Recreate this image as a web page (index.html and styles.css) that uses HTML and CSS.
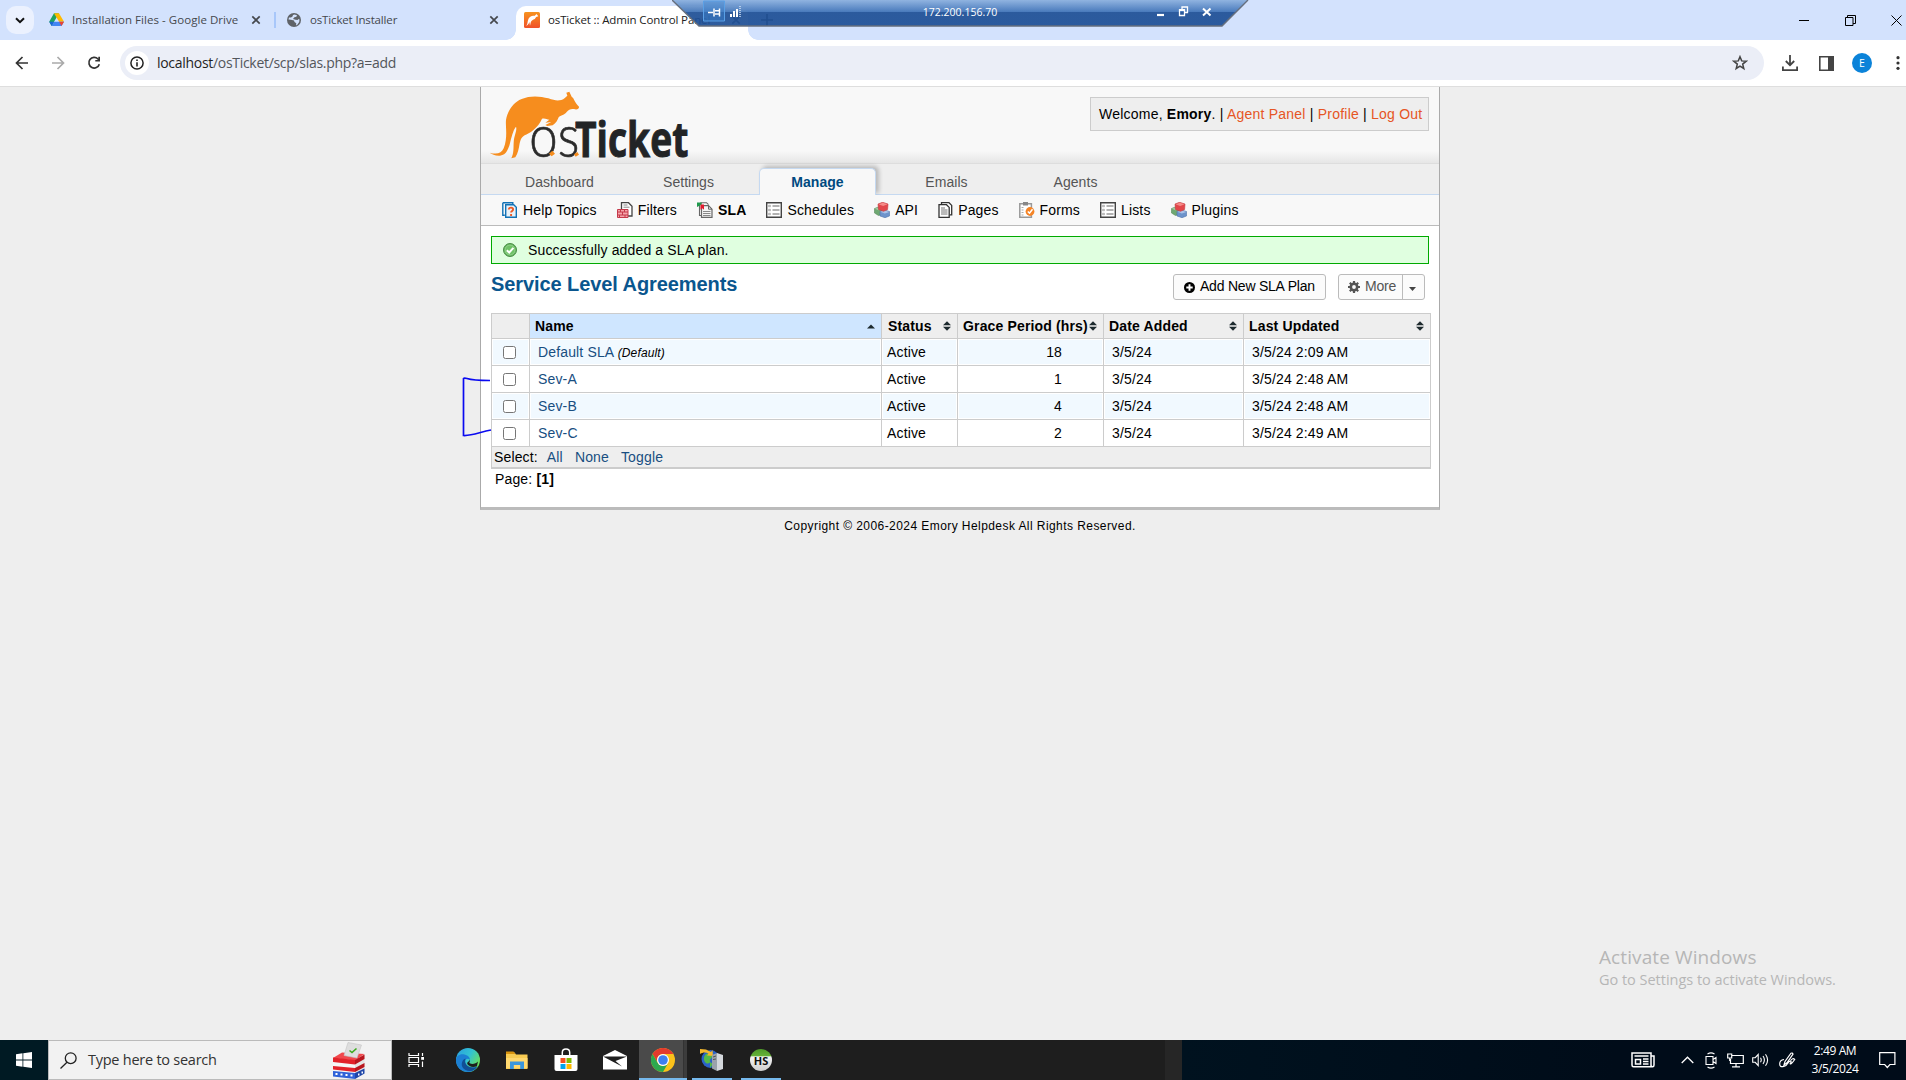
FILE: index.html
```html
<!DOCTYPE html>
<html lang="en">
<head>
<meta charset="utf-8">
<title>osTicket :: Admin Control Panel</title>
<link rel="stylesheet" href="styles.css">
</head>
<body>
<svg class="defs" width="0" height="0">
  <defs>
    <symbol id="i-x" viewBox="0 0 10 10"><path d="M1.3 1.3l7.4 7.4M8.7 1.3L1.3 8.7" stroke="currentColor" stroke-width="1.7" fill="none"/></symbol>
    <symbol id="i-list" viewBox="0 0 16 16"><path d="M.7.7h14.6v14.6H.7z" fill="#fff" stroke="#444" stroke-width="1.4"/><path d="M6.500 4h7M6.500 8h7M6.500 12h7" stroke="#999" stroke-width="1.3"/><path d="M2.500 3.200h2v1.600h-2zM2.500 7.200h2v1.600h-2zM2.500 11.200h2v1.600h-2z" fill="#bbb" stroke="#aaa" stroke-width=".6"/></symbol>
    <symbol id="i-cubes" viewBox="0 0 16 16"><path d="M.5 6.500l4-1.500 3.500 2v5.500l-3.500 1L.5 11z" fill="#6fa872" stroke="#578a5b" stroke-width=".6"/><path d="M.8 6.800l3.700 1.400L7 7.500 4.500 5.300z" fill="#a4cba5"/><path d="M6 9.500l4.500-1.500 5 1.500v4.500L11 15.700l-5-1.700z" fill="#6d93cb" stroke="#4f74ab" stroke-width=".6"/><path d="M6.200 9.800l4.700 1.700 4.400-1.600L11 8.300z" fill="#a9c2e8"/><path d="M4 2l4.500-1.700L14 2l-.4 5.500L9.500 9.300 4.500 7.500z" fill="#e2474b" stroke="#c23a40" stroke-width=".6"/><path d="M4.400 2.300l4.800 1.700 4.400-1.700L8.800.8z" fill="#f58b88"/></symbol>
    <symbol id="i-sort" viewBox="0 0 8 10"><path d="M0 4.300l4-4 4 4zM0 5.700l4 4 4-4z" fill="#1d2a2e"/></symbol>
    <linearGradient id="g-rdp" x2="0" y2="1"><stop offset="0" stop-color="#8bb0de"/><stop offset=".47" stop-color="#3d71b6"/><stop offset=".48" stop-color="#1f5096"/><stop offset="1" stop-color="#1f5096"/></linearGradient>
    <linearGradient id="g-fav" x2="0" y2="1"><stop offset="0" stop-color="#f7931e"/><stop offset="1" stop-color="#f0512a"/></linearGradient>
    <linearGradient id="g-edge" x1="0" y1="0" x2="1" y2=".6"><stop offset="0" stop-color="#2a9de0"/><stop offset=".55" stop-color="#32c3d2"/><stop offset="1" stop-color="#6be05a"/></linearGradient>
    <linearGradient id="g-hs" x2="0" y2="1"><stop offset="0" stop-color="#4f9a2a"/><stop offset=".3" stop-color="#64b036"/><stop offset=".36" stop-color="#f4f4f4"/><stop offset="1" stop-color="#cfcfcf"/></linearGradient>
  </defs>
</svg>

<header class="tabstrip">
  <span class="tab-search"><svg width="10" height="7" viewBox="0 0 10 7"><path d="M1 1.200l4 4 4-4" stroke="#111" stroke-width="2" fill="none"/></svg></span>
  <div class="tab tab-drive">
    <svg width="15" height="14" viewBox="0 0 15 14"><path d="M5 .3h5L5.200 8.500 2.700 13 .2 8.800z" fill="#1ea362"/><path d="M5 .3h5l5 8.500h-4.900z" fill="#ffba00"/><path d="M2.700 13l2.400-4.200H15L12.500 13z" fill="#4285f4"/><path d="M.2 8.800h4.900L2.700 13z" fill="#1a66d6"/><path d="M10.100 8.800H15L12.500 13z" fill="#ea4335"/></svg>
    <span class="tab-title t-drive">Installation Files - Google Drive</span>
    <svg class="x" width="10" height="10"><use href="#i-x"/></svg>
  </div>
  <i class="tab-sep"></i>
  <div class="tab tab-inst">
    <svg width="14" height="14" viewBox="0 0 14 14"><circle cx="7" cy="7" r="7" fill="#5f6368"/><path d="M7.500 1.400l2.500.8-.6 1.500-2 .6L6 6l2.500.8 2 .2 1.200-1 .8.600-.3 2.500-1.700 2.500-1.500 1 .3-2.300-1.800-1.300-.5-1.500L4 6.800 1.500 6.500l.5-2L4 4.500l1.500-1 .5-1.500z" fill="#d3e2fd"/></svg>
    <span class="tab-title t-inst">osTicket Installer</span>
    <svg class="x" width="10" height="10"><use href="#i-x"/></svg>
  </div>
  <div class="tab tab-active">
    <svg width="16" height="16" viewBox="0 0 16 16"><rect width="16" height="16" rx="1.500" fill="url(#g-fav)"/><path d="M2 13.800C4 13 3.200 8.500 5 6c1.500-2.200 4-2.300 5.800-2.300L12.500 2l1.800 2.300-2.200.7-1.300 2C9 7.500 7.500 8.500 6.800 10.200l-.8 3.500-.6-3.700C4.800 11.500 4 13.500 2 13.800z" fill="#fff"/></svg>
    <span class="tab-title t-admin">osTicket :: Admin Control Panel</span>
    <svg class="x" width="10" height="10"><use href="#i-x"/></svg>
  </div>
  <svg class="newtab" width="12" height="12" viewBox="0 0 12 12"><path d="M6 0v12M0 6h12" stroke="#333" stroke-width="1.600"/></svg>
  <div class="win-ctl">
    <svg width="11" height="11" viewBox="0 0 11 11"><path d="M0 5.500h10" stroke="#000"/></svg>
    <svg width="11" height="11" viewBox="0 0 11 11"><path d="M.5 2.500h7.500v8H.5zM2.500 2.500v-2h8v8H8" fill="none" stroke="#000"/></svg>
    <svg width="11" height="11" viewBox="0 0 11 11"><path d="M.5.5l10 10M10.500.5l-10 10" stroke="#000"/></svg>
  </div>
  <div class="rdp">
    <svg width="578" height="28" viewBox="0 0 578 28"><path d="M0 0h576l-26 26H27z" fill="url(#g-rdp)" opacity=".93"/><path d="M0 0l27 26h523l26-26" fill="none" stroke="#666f7d" stroke-width="1.400"/><path d="M31.500 1h21v20h-21z" fill="#3b82cf" fill-opacity=".45" stroke="#5aa0e6"/>
      <path d="M36 12.500h5M42 8.500v8M43 10.700h4M43 14h4M47.500 8.500v8" stroke="#fff" stroke-width="1.500" fill="none"/>
      <path d="M59 17v-3M62 17v-6M65 17V9" stroke="#fff" stroke-width="2"/><path d="M68 17V6" stroke="#cfe0f5" stroke-width="1.500" stroke-dasharray="1 1"/>
      <path d="M485 15h7" stroke="#fff" stroke-width="2.200"/><path d="M507.500 10h5v5.500h-5zM510 9.500V7h5.500v5.500H513" fill="none" stroke="#fff" stroke-width="1.300"/><path d="M507 10h6" stroke="#fff" stroke-width="2"/><path d="M531 8.500l7.500 7M538.500 8.500l-7.500 7" stroke="#fff" stroke-width="2"/></svg>
    <span>172.200.156.70</span>
  </div>
</header>

<div class="toolbar">
  <svg class="nav-ic" width="14" height="14" viewBox="0 0 14 14"><path d="M7.500 1L1.500 7l6 6M1.500 7H13" stroke="#333" stroke-width="1.700" fill="none"/></svg>
  <svg class="nav-ic" width="14" height="14" viewBox="0 0 14 14"><path d="M6.500 1l6 6-6 6M12.500 7H1" stroke="#aaa" stroke-width="1.700" fill="none"/></svg>
  <svg class="nav-ic" width="14" height="14" viewBox="0 0 14 14"><path d="M12.300 8.200A5.300 5.300 0 1 1 11 3l1 1" stroke="#333" stroke-width="1.700" fill="none"/><path d="M13 .8V5.500H8.300V3.900h3V.8z" fill="#333"/></svg>
  <div class="omnibox">
    <span class="site-info"><svg width="14" height="14" viewBox="0 0 14 14"><circle cx="7" cy="7" r="6.100" fill="none" stroke="#222" stroke-width="1.500"/><path d="M7 6.200V10.500" stroke="#222" stroke-width="1.600"/><path d="M6.200 3.500h1.600v1.500H6.200z" fill="#222"/></svg></span>
    <span class="url">localhost<span>/osTicket/scp/slas.php?a=add</span></span>
    <svg class="star" width="16" height="16" viewBox="0 0 16 16"><path d="M8 1.700l1.700 4.200 4.500.3-3.500 2.900 1.100 4.400L8 11.100l-3.800 2.400 1.100-4.400-3.500-2.900 4.500-.3z" fill="none" stroke="#444" stroke-width="1.500"/></svg>
  </div>
  <div class="tools">
    <svg class="dl" width="16" height="16" viewBox="0 0 16 16"><path d="M8 0v9.500M3.800 6L8 10.200 12.200 6M.9 11.500v3.600h14.200v-3.600" fill="none" stroke="#444" stroke-width="1.800"/></svg>
    <svg width="15" height="15" viewBox="0 0 15 15"><path d="M.8.800h13.400v13.400H.8z" fill="none" stroke="#444" stroke-width="1.600"/><path d="M9 0h6v15H9z" fill="#444"/></svg>
    <span class="avatar">E</span>
    <svg class="kebab" width="4" height="14" viewBox="0 0 4 14"><circle cx="2" cy="1.700" r="1.600" fill="#333"/><circle cx="2" cy="7" r="1.600" fill="#333"/><circle cx="2" cy="12.300" r="1.600" fill="#333"/></svg>
  </div>
</div>

<main class="viewport">
  <div class="container">
    <div class="head">
      <svg class="logo" width="210" height="76" viewBox="45 21 630 228">
        <path fill="#f68d1e" d="M59 218C80 224 95 220 101 205C114 172 106 140 108 120C112 95 128 68 155 57C180 46 210 48 235 55C252 61 262 63 274 60C282 57 288 50 292 47L289 38L298 35L305 50C313 55 313 66 327 80C328 87 320 90 312 87C302 86 296 88 290 96C284 105 272 105 266 112C262 122 258 130 248 136L232 138L226 135L244 126L226 128L238 119C230 118 226 114 216 116C208 134 196 148 176 160C156 170 154 172 149 190C146 208 144 220 136 232L124 235C132 218 130 205 131 188C132 165 142 152 138 140C132 146 126 165 121 185C114 216 104 226 90 227C76 228 66 223 59 218Z"/>
        <text x="178" y="230" class="logo-os" textLength="150" lengthAdjust="spacingAndGlyphs">os</text>
        <path d="M237 221l10-9 8 9-10 8zM312 223l10-7 5 8-10 6z" fill="#f68d1e"/>
        <text x="315" y="231" class="logo-ticket" textLength="340" lengthAdjust="spacingAndGlyphs">Ticket</text>
      </svg>
      <p class="welcome">Welcome, <b>Emory</b>. | <a>Agent Panel</a> | <a>Profile</a> | <a>Log Out</a></p>
    </div>
    <nav class="nav"><a>Dashboard</a><a>Settings</a><a class="active">Manage</a><a>Emails</a><a>Agents</a></nav>
    <nav class="subnav">
      <a><svg width="16" height="16" viewBox="0 0 16 16"><path d="M.8.7h10v2M.8.7v12.500h2" fill="none" stroke="#1272b6" stroke-width="1.400"/><path d="M3.700 2.700h8l2.600 2.600v10H3.700z" fill="#e9f2f9" stroke="#1272b6" stroke-width="1.400"/><path d="M6.800 7.500c0-2.500 4.300-2.500 4.300 0 0 1.500-2 1.500-2 3M9.100 12v2" stroke="#ee5a24" stroke-width="1.900" fill="none"/></svg>Help Topics</a>
      <a><svg width="16" height="16" viewBox="0 0 16 16"><path d="M4.500 8V.7h7l3.500 3.500V14H11" fill="#fff" stroke="#444" stroke-width="1.300"/><path d="M6.500 3h4M6.500 5.200h6" stroke="#888"/><path d="M.5 7.500h10.500v8H.5z" fill="#f5a5ab" stroke="#c5394a"/><path d="M.5 10h10.500M.5 13h10.500M3.500 7.500V10M7.500 7.500V10M5.500 10v3M2.500 13v2.500M8 13v2.500" stroke="#c5394a"/></svg>Filters</a>
      <a class="on"><svg width="16" height="16" viewBox="0 0 16 16"><path d="M2.500 3V13.500H4M4 2.500V.7h5.500l2 2" fill="none" stroke="#666" stroke-width="1.100"/><path d="M4.500 3.700h7l3.500 3.500v8.200H4.500z" fill="#f4f4f4" stroke="#666" stroke-width="1.200"/><path d="M11.500 3.700v3.500H15" fill="none" stroke="#666"/><path d="M6 9.500h7.500M6 11.500h7.500M6 13.500h7.500" stroke="#888"/><path d="M0 .5h4.500v2.200L0 5z" fill="#1f9a4d"/><path d="M3.500 2.500h3.500v5.200L5.300 6.300 3.500 7.700z" fill="#e01b2e"/></svg>SLA</a>
      <a><svg width="16" height="16"><use href="#i-list"/></svg>Schedules</a>
      <a><svg width="16" height="16"><use href="#i-cubes"/></svg>API</a>
      <a><svg width="15" height="16" viewBox="0 0 15 16"><path d="M3.500 2.500V.7h7.500l2.700 2.700v9.500h-2" fill="#fff" stroke="#333" stroke-width="1.300"/><path d="M1 2.700h7.500l2.700 2.700v9.900H1z" fill="#fff" stroke="#333" stroke-width="1.300"/><path d="M3 6h4M3 8h6.500M3 10h6.500M3 12h6.500" stroke="#777"/></svg>Pages</a>
      <a><svg width="16" height="16" viewBox="0 0 16 16"><path d="M.8 1.800h11.600v13.400H.8z" fill="#fff" stroke="#999" stroke-width="1.500"/><path d="M4 0h5v3.500H4z" fill="#888"/><path d="M2.500 5.500h2M2.500 8h2M2.500 10.500h2M2.500 13h2" stroke="#aaa"/><circle cx="11" cy="9.500" r="4.400" fill="#f58426"/><path d="M8.800 9.500l1.700 1.700 3-4" stroke="#fff" stroke-width="1.500" fill="none"/></svg>Forms</a>
      <a><svg width="16" height="16"><use href="#i-list"/></svg>Lists</a>
      <a><svg width="16" height="16"><use href="#i-cubes"/></svg>Plugins</a>
    </nav>
    <section class="content">
      <div class="notice"><svg width="14" height="14" viewBox="0 0 14 14"><circle cx="7" cy="7" r="6.500" fill="#5cb055" stroke="#4b8f48"/><circle cx="7" cy="7" r="5" fill="#6fc267" stroke="#a6dba0" stroke-width=".7"/><path d="M3.800 7.200l2.400 2.300 4.200-4.700" stroke="#fff" stroke-width="2" fill="none"/></svg>Successfully added a SLA plan.</div>
      <div class="title-row">
        <h2>Service Level Agreements</h2>
        <a class="btn btn-add"><svg width="11" height="11" viewBox="0 0 11 11"><circle cx="5.500" cy="5.500" r="5.500" fill="#000"/><path d="M5.500 2.300v6.400M2.300 5.500h6.400" stroke="#fff" stroke-width="1.900"/></svg><span>Add New SLA Plan</span></a>
        <span class="btn btn-more"><span class="more"><svg width="12" height="12" viewBox="0 0 12 12"><circle cx="6" cy="6" r="3.200" fill="none" stroke="#555" stroke-width="2.600"/><path d="M6 0v2.500M6 9.500V12M0 6h2.500M9.500 6H12M1.800 1.800l1.700 1.700M8.500 8.500l1.700 1.700M10.200 1.800L8.500 3.500M3.500 8.500l-1.700 1.700" stroke="#555" stroke-width="2.200"/></svg><span>More</span></span><span class="caret"><svg width="7" height="4" viewBox="0 0 7 4"><path d="M0 0h7L3.500 4z" fill="#444"/></svg></span></span>
      </div>
      <table class="list">
        <colgroup><col class="c0"><col class="c1"><col class="c2"><col class="c3"><col class="c4"><col class="c5"></colgroup>
        <thead><tr><th></th>
          <th class="sorted"><div>Name<svg width="8" height="5" viewBox="0 0 8 5"><path d="M0 4.500L4 .5l4 4z" fill="#1d2a2e"/></svg></div></th>
          <th><div>Status<svg width="8" height="10"><use href="#i-sort"/></svg></div></th>
          <th><div>Grace Period (hrs)<svg width="8" height="10"><use href="#i-sort"/></svg></div></th>
          <th><div>Date Added<svg width="8" height="10"><use href="#i-sort"/></svg></div></th>
          <th><div>Last Updated<svg width="8" height="10"><use href="#i-sort"/></svg></div></th></tr></thead>
        <tbody>
          <tr><td><input type="checkbox"></td><td class="name"><a>Default SLA</a> <em>(Default)</em></td><td>Active</td><td class="num">18</td><td class="date">3/5/24</td><td class="date">3/5/24 2:09 AM</td></tr>
          <tr><td><input type="checkbox"></td><td class="name"><a>Sev-A</a></td><td>Active</td><td class="num">1</td><td class="date">3/5/24</td><td class="date">3/5/24 2:48 AM</td></tr>
          <tr><td><input type="checkbox"></td><td class="name"><a>Sev-B</a></td><td>Active</td><td class="num">4</td><td class="date">3/5/24</td><td class="date">3/5/24 2:48 AM</td></tr>
          <tr><td><input type="checkbox"></td><td class="name"><a>Sev-C</a></td><td>Active</td><td class="num">2</td><td class="date">3/5/24</td><td class="date">3/5/24 2:49 AM</td></tr>
        </tbody>
        <tfoot><tr><td colspan="6"><div>Select:<a>All</a><a>None</a><a>Toggle</a></div></td></tr></tfoot>
      </table>
      <p class="pager">Page: <b>[1]</b></p>
    </section>
    <svg class="bracket" width="32" height="64" viewBox="0 0 32 64"><path d="M30 6.500C20 6.500 13 6.500 7 4.500C5 4 4 4 3.500 4.500V61.500C12 62 20 58 31 56" fill="none" stroke="#0a0af0" stroke-width="1.700"/></svg>
  </div>
  <p class="copyright">Copyright © 2006-2024 Emory Helpdesk All Rights Reserved.</p>
  <div class="watermark"><strong>Activate Windows</strong><span>Go to Settings to activate Windows.</span></div>
</main>

<footer class="taskbar">
  <span class="start"><svg width="16" height="16" viewBox="0 0 16 16"><path d="M0 2.200l6.500-.9v6.300H0zM7.300 1.200L16 0v7.600H7.300zM0 8.400h6.500v6.300L0 13.800zM7.300 8.400H16V16l-8.700-1.200z" fill="#fff"/></svg></span>
  <div class="search">
    <svg width="17" height="17" viewBox="0 0 17 17"><circle cx="10.700" cy="6.200" r="5.400" fill="none" stroke="#222" stroke-width="1.300"/><path d="M7 10.200L.5 16.500" stroke="#222" stroke-width="1.300"/></svg>
    <span>Type here to search</span>
    <svg class="ballot" width="32" height="37" viewBox="0 0 32 37"><path d="M0 16l22 2v19L0 34.500z" fill="#f6f6f6"/><path d="M22 18l9.500-5v18.500L22 37z" fill="#e4e4e4"/><path d="M0 16l9-5.500 22.500 1.500L22 18.500z" fill="#f0484c"/><path d="M0 15.500l22 2.500v4.500L0 20zM0 24l22 2v4L0 27.500z" fill="#e2222a"/><path d="M22 18l9.500-5.500v4.500L22 22.500zM22 26l9.500-5v4L22 30z" fill="#b9161e"/><path d="M0 29l22 2v6L0 34.500z" fill="#2f62d8"/><path d="M22 31l9.500-4.500v5L22 37z" fill="#1f46a8"/><path d="M2.500 32h2M7.500 32.500h2M12.500 33h2M17.500 33.500h2M25 32.500h1.500M28.500 30.500h1.500" stroke="#fff" stroke-width="2"/><path d="M11 13.500L15 .5l13.500 2.500L24 16z" fill="#dedede" stroke="#c4c4c4" stroke-width=".6"/><path d="M16.500 8.500l2.500 2 4.500-4" stroke="#3bab1e" stroke-width="1.600" fill="none"/></svg>
  </div>
  <div class="apps">
    <span class="app app-view"><svg width="17" height="16" viewBox="0 0 17 16"><path d="M1 1v2.500h9.500V1M1 15v-2.500h9.500V15M1 5.500h9.500v5H1zM14.500 1v3M14.500 9.500V15" fill="none" stroke="#fff" stroke-width="1.200"/><path d="M13.200 5h2.800v2.800h-2.800z" fill="#fff"/></svg></span>
    <span class="app"><svg width="24" height="24" viewBox="0 0 24 24"><circle cx="12" cy="12" r="12" fill="url(#g-edge)"/><path d="M0 12c0-4 4-6.500 8.500-5.500 4 .8 5.500 3.500 5.500 5.500-1.500-2-4.500-1.500-5 1-.5 3.500 3 6.500 7 6.500 2.500 0 4.500-1 5.500-1.500C19.500 22 16 24 12 24 5 24 0 19 0 12z" fill="#1c7fd3"/><path d="M9.500 22C4 19.500 5 12 9.500 10.500c-1 3.500 0 9 8 9 2 0 3-.7 4-1.500-2.500 5-7.500 6-12 4z" fill="#114f95"/><path d="M14 12c.3 1.300-.8 2-.6 2.800.4 1.800 6.600 1.600 8.600-1.200l-1 4.400c-4 2-9 .5-10-3z" fill="#1e1e1e"/></svg></span>
    <span class="app"><svg width="22" height="19" viewBox="0 0 22 19"><path d="M0 1h8l2 2.500h11.500V18H0z" fill="#f8cb52"/><path d="M0 .5h7.500L9.500 3H0z" fill="#d9940f"/><path d="M0 7h21.500v10H0z" fill="#ffd86f"/><path d="M4 18v-7.500h14V18h-3.800v-4H7.800v4z" fill="#3a96dd"/></svg></span>
    <span class="app"><svg width="24" height="24" viewBox="0 0 24 24"><path d="M.5 7h23v14q0 2-2 2h-19q-2 0-2-2z" fill="#fff"/><path d="M8.300 8V4.500q0-3.500 3.700-3.500t3.700 3.500V8" stroke="#fff" stroke-width="1.500" fill="none"/><path d="M6.500 10h5v5h-5z" fill="#f25022"/><path d="M12.500 10h5v5h-5z" fill="#7fba00"/><path d="M6.500 16h5v5h-5z" fill="#00a4ef"/><path d="M12.500 16h5v5h-5z" fill="#ffb900"/></svg></span>
    <span class="app"><svg width="24" height="20" viewBox="0 0 24 20"><path d="M0 6L12 0l12 6v13.500H0z" fill="#fff"/><path d="M0 6.500h24L12.500 11l6.500 5.500L8.500 11z" fill="#1e1e1e"/></svg></span>
    <span class="app app-chrome"><svg width="24" height="24" viewBox="0 0 24 24"><circle cx="12" cy="12" r="12" fill="#fbc11a"/><path d="M1.600 6A12 12 0 0 1 22.400 6H12a6 6 0 0 0-5.200 9z" fill="#e33b2e"/><path d="M1.600 6A12 12 0 0 0 12 24l5.200-9a6 6 0 0 1-10.400 0z" fill="#2da94f"/><circle cx="12" cy="12" r="6" fill="#fff"/><circle cx="12" cy="12" r="4.800" fill="#3d7ff0"/></svg></span>
    <span class="app app-iis run"><svg width="24" height="24" viewBox="0 0 24 24"><circle cx="10.500" cy="11" r="9" fill="#2b62c9"/><path d="M6 6c3-2 5 0 6 2s-3 3-2 5-3 4-5 1-1-6 1-8zM10 14l3 2-3 4z" fill="#55b948"/><path d="M0 1l6 .5 5 2.500 1.500-2 .5 6-6-.5 1.500-2C6 4 3 4 0 6z" fill="#f4b82e"/><path d="M12 7l5-2v18l-5-2.500z" fill="#9aa3ab"/><path d="M17 5l6 2v14l-6 2z" fill="#d4d8dc"/><path d="M13 9l3-1M13 11.500l3-.5" stroke="#555"/></svg></span>
    <span class="app run"><svg width="22" height="22" viewBox="0 0 22 22"><circle cx="11" cy="11" r="11" fill="url(#g-hs)"/><text x="11" y="15.500" class="hs" text-anchor="middle">HS</text></svg></span>
  </div>
  <i class="seam"></i>
  <div class="tray">
    <svg class="news" width="24" height="16" viewBox="0 0 24 16"><path d="M1 1h19v13.800H2.500Q1 14.800 1 13zM20 4h3v9q0 1.800-1.500 1.800T20 13" fill="none" stroke="#fff" stroke-width="1.500"/><path d="M3.500 4h14M12 7h5.500M12 9.500h5.500M12 12h5.500" stroke="#fff" stroke-width="1.300"/><path d="M4.500 7.500h5v4.500h-5z" fill="none" stroke="#fff" stroke-width="1.500"/></svg>
    <svg class="up" width="13" height="8" viewBox="0 0 13 8"><path d="M.7 7L6.500 1.200 12.300 7" fill="none" stroke="#fff" stroke-width="1.300"/></svg>
    <svg class="meet" width="12" height="17" viewBox="0 0 12 17"><path d="M1 4.500h7v8H1zM8 7.500l3-2v6l-3-2M2.500 2q3.500-2.200 7 0M2.500 15q3.500 2.200 7 0" fill="none" stroke="#fff" stroke-width="1.100"/></svg>
    <svg class="net" width="17" height="15" viewBox="0 0 17 15"><path d="M5 2.500h11.300v8H3.500V6M9 10.500v3M5 13.800h8M.7 1h4v4h-4zM2.700 5v3" fill="none" stroke="#fff" stroke-width="1.200"/></svg>
    <svg class="vol" width="17" height="14" viewBox="0 0 17 14"><path d="M.7 4.700h2.500l3-3.200v11l-3-3.200H.7zM8.500 4.800q1.500 2.200 0 4.400M11 3q2.800 4 0 8M13.500 1.200q4.200 5.800 0 11.600" fill="none" stroke="#fff" stroke-width="1.100"/></svg>
    <svg class="pen" width="17" height="16" viewBox="0 0 17 16"><path d="M5 13l1-3.500L12 1.200q1.500-.7 2 1L8 10.800zM5 7.500Q.7 8 .7 12q0 3.500 4 2.500 3-1 4.500-3.800 1.500-2 2.500-1.500t-.5 2.500q.5 1.500 4.500-4.200-2-2-4 1" fill="none" stroke="#fff" stroke-width="1.200"/></svg>
    <div class="clock"><span>2:49 AM</span><span class="d">3/5/2024</span></div>
    <svg class="act" width="17" height="17" viewBox="0 0 17 17"><path d="M.7.700h15.200v11.800h-5L8.300 15.500l-2.600-3h-5z" fill="none" stroke="#fff" stroke-width="1.200"/></svg>
  </div>
</footer>
</body>
</html>
```
FILE: styles.css
```css
* { box-sizing: border-box; }
body {
  margin: 0; width: 1906px; height: 1080px; overflow: hidden;
  display: flex; flex-direction: column; background: #eee;
  font: 14px/16px "Liberation Sans", Arial, sans-serif; color: #000;
}
svg { display: block; flex: none; }
p, h2 { margin: 0; }
.defs { position: absolute; }

/* browser tab strip */
.tabstrip {
  position: relative; flex: none; height: 40px; background: #d3e2fd;
  display: flex; align-items: flex-start; padding: 0 4px 0 6px;
  font: 12px/16px "Open Sans", "Noto Sans", sans-serif; color: #45484d;
}
.tab-search { width: 28px; height: 28px; margin-top: 6px; border-radius: 10px; background: #ebf1fe; display: grid; place-items: center; }
.tab { display: flex; align-items: center; height: 40px; }
.tab svg:first-child { margin-right: 8px; }
.tab .x { margin-left: auto; color: #45484d; }
.tab-drive { width: 227px; padding-left: 15px; margin-right: 13px; }
.tab-sep { width: 2px; height: 16px; margin: 12px 11px 0 0; background: #a8c7fa; }
.tab-inst { width: 212px; }
.tab-inst svg:first-child { margin-right: 9px; }
.tab-active { position: relative; width: 232px; height: 34px; margin: 6px 0 0 17px; padding: 0 7px 6px 8px; background: #fff; border-radius: 10px 10px 0 0; color: #222; }
.tab-active::before, .tab-active::after { content: ""; position: absolute; bottom: 0; width: 10px; height: 10px; }
.tab-active::before { left: -10px; background: radial-gradient(circle at 0 0, transparent 9.500px, #fff 10px); }
.tab-active::after { right: -10px; background: radial-gradient(circle at 100% 0, transparent 9.500px, #fff 10px); }
.tab-title { white-space: nowrap; font-size: 11.500px; }
.t-drive { letter-spacing: .05px; }
.t-inst { letter-spacing: -.15px; }
.t-admin { letter-spacing: -.13px; }
.newtab { margin: 14px 0 0 13px; }
.win-ctl { margin: 15px 0 0 auto; display: flex; gap: 35px; }
.rdp { position: absolute; left: 672px; top: 0; width: 578px; height: 28px; color: #fff; }
.rdp span { position: absolute; left: 243px; width: 90px; top: 4px; text-align: center; font-size: 10.500px; line-height: 16px; letter-spacing: .03px; }

/* browser toolbar */
.toolbar { flex: none; height: 47px; background: #fff; border-bottom: 1px solid #dedede; display: flex; align-items: center; padding: 0 6px 0 15px; }
.nav-ic { margin-right: 22px; }
.omnibox { flex: none; width: 1644px; height: 34px; border-radius: 17px; background: #ebeef7; display: flex; align-items: center; padding: 0 16px 0 5px; margin-left: -3px; }
.site-info { width: 24px; height: 24px; border-radius: 12px; background: #fff; display: grid; place-items: center; }
.url { margin-left: 8px; font: 14px/20px "Open Sans", "Noto Sans", sans-serif; color: #1f1f1f; letter-spacing: -.3px; }
.url span { color: #53565b; }
.star { margin-left: auto; }
.tools { margin-left: auto; display: flex; align-items: center; gap: 20px; }
.dl { margin-right: 1px; }
.avatar { width: 20px; height: 20px; border-radius: 10px; background: #0b83d9; color: #fff; text-align: center; font: 10.500px/20px "Open Sans", sans-serif; margin: 0 -1px 0 -2px; }
.kebab { margin-left: 5px; }

/* page */
.viewport { position: relative; flex: 1; }
.container { position: relative; width: 960px; height: 423px; margin: 0 0 0 480px; background: #fff; border: 1px solid #aaa; border-top: 0; border-bottom: 3px solid #bbb; letter-spacing: .15px; }
.head { height: 76px; display: flex; justify-content: space-between; align-items: flex-start; padding: 0 10px 0 4px; background: linear-gradient(#f8f8f8 84%, #e6e6e6); }
.logo { overflow: visible; letter-spacing: 0; }
.logo-os { font: 300 178px "Lato", sans-serif; fill: #2b2b2b; stroke: #2b2b2b; stroke-width: 2px; }
.logo-ticket { font: 700 144px "Open Sans", sans-serif; fill: #222426; stroke: #222426; stroke-width: 3px; }
.welcome { margin-top: 10px; height: 34px; width: 339px; padding: 0 8px; border: 1px solid #ccc; background: #eee; line-height: 32px; white-space: nowrap; text-align: center; letter-spacing: .22px; }
.welcome a { color: #e65524; }
.nav { height: 32px; border-top: 1px solid #ddd; border-bottom: 1px solid #c5d9f1; background: #eee; display: flex; gap: 12px; padding: 4px 0 0 20px; letter-spacing: .05px; }
.nav a { width: 117px; height: 27px; line-height: 28px; text-align: center; color: #555; }
.nav .active { border: 1px solid #c5d9f1; border-bottom: 0; border-radius: 5px 5px 0 0; background: #f8f8f8; color: #004a80; font-weight: bold; line-height: 26px; box-shadow: 3px -2px 4px rgba(0,0,0,.22); clip-path: inset(-8px -8px 0 -1px); }
.subnav { height: 31px; border-bottom: 1px solid #bbb; background: #f8f8f8; display: flex; align-items: center; gap: 20px; padding-left: 21px; }
.subnav a { display: flex; align-items: center; gap: 5px; }
.on { font-weight: bold; }
.content { padding: 10px 8px 0 10px; }
.notice { width: 938px; height: 28px; border: 1px solid #0a0; background: #e0ffe0; display: flex; align-items: center; gap: 11px; padding-left: 11px; }
.title-row { height: 49px; display: flex; align-items: flex-start; padding: 10px 6px 0 0; }
h2 { margin: -2px auto 0 0; font-size: 20px; line-height: 24px; color: #0a568e; letter-spacing: -.08px; }
.btn { height: 26px; border: 1px solid #bbb; border-radius: 3px; background: #fbfbfb; display: flex; align-items: center; letter-spacing: -.22px; }
.btn span span, .btn-add span { margin-top: -2px; }
.btn-add { width: 153px; padding-left: 10px; gap: 5px; white-space: nowrap; }
.btn-more { width: 87px; margin-left: 12px; color: #555; }
.more { display: flex; align-items: center; gap: 5px; width: 63px; padding-left: 9px; }
.caret { height: 24px; border-left: 1px solid #bbb; flex: 1; padding: 12px 0 0 6px; }

.list { width: 940px; table-layout: fixed; border-spacing: 0; border: solid #ccc; border-width: 1px 0 0 1px; }
.c0 { width: 38px; } .c1 { width: 352px; } .c2 { width: 76px; } .c3 { width: 146px; } .c4 { width: 140px; } .c5 { width: 187px; }
.list th, .list td { padding: 0; border: solid #ccc; border-width: 0 1px 1px 0; text-align: left; white-space: nowrap; }
.list th { height: 25px; background: #eee; }
.list th div { display: flex; align-items: center; justify-content: space-between; padding: 0 6px 0 6px; height: 24px; }
.list th.sorted div { padding-left: 5px; }
.list th:nth-child(4) div { padding-left: 5px; }
.list th:nth-child(n+5) div { padding-left: 5px; }
.list .sorted { background: #cfe6ff; }
.list tbody td { height: 27px; padding-left: 5px; }
.list tbody tr:nth-child(odd) td { background: #f1f9ff; box-shadow: inset 0 0 0 1px #fff; }
.list tbody td:first-child { padding: 0 0 0 11px; }
.list input { display: block; width: 13px; height: 13px; margin: 0; }
.list .name { padding-left: 8px; }
.list a { color: #184e81; }
.list em { font-size: 12px; }
.list .num { padding: 0 41px 0 0; text-align: right; }
.list .date { padding-left: 8px; }
.list tfoot td { height: 22px; background: #eee; border-bottom-width: 2px; }
.list tfoot div { display: flex; height: 20px; line-height: 20px; padding-left: 2px; }
.list tfoot a { margin-left: 12px; }
.list tfoot a:first-child { margin-left: 9px; }
.pager { padding: 2px 0 0 4px; line-height: 16px; }
.bracket { position: absolute; left: -21px; top: 287px; }
.copyright { width: 960px; margin: 8px 0 0 480px; text-align: center; font-size: 12px; line-height: 16px; letter-spacing: .43px; }
.watermark { position: absolute; left: 1599px; top: 857px; color: #b6b6b6; font-family: "Open Sans", "Noto Sans", sans-serif; display: flex; flex-direction: column; white-space: nowrap; }
.watermark strong { font-weight: 400; font-size: 19px; line-height: 26px; letter-spacing: .1px; }
.watermark span { font-size: 14.500px; line-height: 20px; letter-spacing: -.02px; }

/* desktop taskbar */
.taskbar { flex: none; height: 40px; background: #1e1e1e; display: flex; font-family: "Open Sans", "Noto Sans", sans-serif; }
.start { width: 48px; background: #001a23; display: grid; place-items: center; }
.search { width: 344px; background: #f2f2f2; border: 1px solid #bbb; display: flex; align-items: center; padding-left: 11px; }
.search span { margin-left: 11px; font-size: 14.500px; color: #333; letter-spacing: -.25px; white-space: nowrap; }
.ballot { margin: 0 26px 0 auto; }
.apps { display: flex; width: 773px; }
.app { flex: none; width: 49px; display: grid; place-items: center; height: 40px; }
.app-view { width: 51px; padding-right: 3px; }
.app-chrome { width: 48px; background: linear-gradient(90deg, #4a4a4a 44px, #333 44px, #333 45px, #3c3c3c 45px); box-shadow: inset 0 -2px #76b9ed; }
.run { position: relative; }
.run::after { content: ""; position: absolute; left: 5px; bottom: 0; width: 40px; height: 2px; background: #76b9ed; }
.hs { font: bold 11px "Open Sans", sans-serif; fill: #111; }
.seam { width: 17px; background: #262626; }
.tray { flex: 1; background: linear-gradient(90deg, #00121f, #000c19 60%); display: flex; align-items: center; padding-left: 449px; color: #fff; }
.up { margin-left: 26px; } .meet { margin-left: 11px; } .net { margin-left: 10px; } .vol { margin-left: 8px; } .pen { margin-left: 10px; }
.clock { width: 60px; margin-left: 9px; display: flex; flex-direction: column; align-items: center; font-size: 12px; line-height: 18px; letter-spacing: -.4px; }
.act { margin-left: 14px; }
```
